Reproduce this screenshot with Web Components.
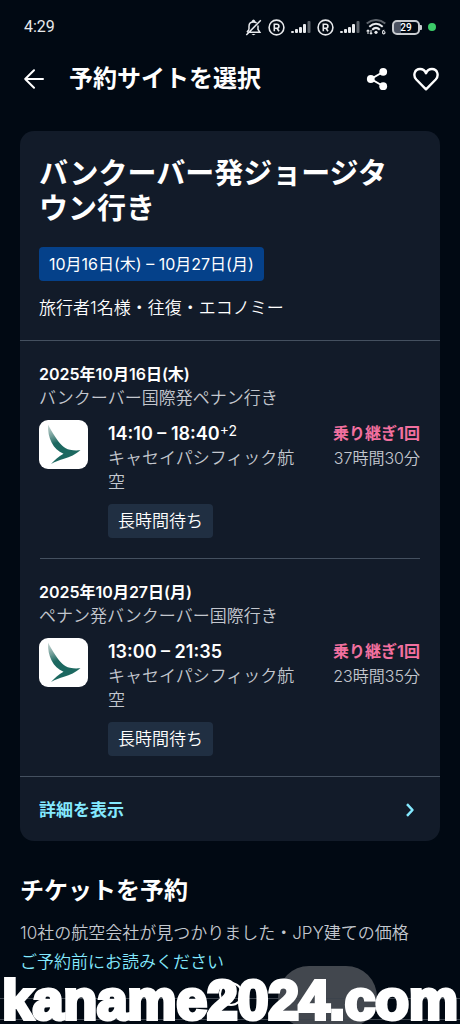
<!DOCTYPE html>
<html lang="ja">
<head>
<meta charset="utf-8">
<meta name="viewport" content="width=device-width, initial-scale=1">
<title>予約サイトを選択</title>
<style>
body { margin: 0; background: #010913; color: #fff; font-family: Inter, "Noto Sans CJK JP", sans-serif; }
</style>
</head>
<body>
<booking-page></booking-page>
<script>
function define(name, html) {
  const template = document.createElement('template');
  template.innerHTML = html;
  customElements.define(name, class extends HTMLElement {
    constructor() {
      super();
      this.attachShadow({ mode: 'open' }).append(template.content.cloneNode(true));
    }
  });
}

define('signal-bars', `
<style>:host { display: block; height: 14px; } svg { display: block; }</style>
<svg width="20" height="14" viewBox="0 0 20 14" fill="#e8eaed" aria-hidden="true">
  <rect x="0" y="11" width="3" height="2" rx="1"/><rect x="4" y="9" width="3" height="4" rx="1"/>
  <rect x="8" y="7" width="3" height="6" rx="1"/><rect x="12" y="4" width="3" height="9" rx="1"/>
  <rect x="16.500" y="1" width="3" height="12" rx="1" fill="#5d636b"/>
</svg>`);

define('roaming-mark', `
<style>:host { display: block; height: 17px; } svg { display: block; }</style>
<svg width="17" height="17" viewBox="0 0 17 17" fill="none" stroke="#e8eaed" stroke-width="1.600" aria-hidden="true">
  <circle cx="8.500" cy="8.500" r="7.400"/>
  <path d="M6.300 12.300V5.200H8.900A2 2 0 0 1 8.900 9.200H6.300M8.900 9.200L11 12.300"/>
</svg>`);

define('status-bar', `
<style>
  :host { display: flex; align-items: center; justify-content: space-between; height: 54px; padding: 0 24px; box-sizing: border-box; }
  time { font: 400 16px/20px Roboto, sans-serif; color: #e8eaed; }
  .icons { display: flex; align-items: center; gap: 6px; }
  svg { display: block; }
  .battery { display: flex; align-items: center; }
  .level { box-sizing: border-box; width: 28px; height: 15px; border: 2px solid #c9ccd0; border-radius: 5px; background: linear-gradient(90deg, #4b5261 30%, transparent 30%); font: 500 10px/11px Roboto, sans-serif; text-align: center; }
  .cap { width: 2px; height: 5px; background: #c9ccd0; border-radius: 0 1px 1px 0; }
  .dot { width: 8px; height: 8px; border-radius: 50%; background: #3ccb69; }
</style>
<time>4:29</time>
<div class="icons">
  <svg width="17" height="17" viewBox="0 0 17 17" fill="none" stroke="#e8eaed" stroke-width="1.500" aria-hidden="true">
    <path d="M4 10.500V7.200C4 4.600 5.800 3 8.500 3C9.600 3 10.700 3.300 11.500 4M13 6.500V10.500L14.800 13.200H4.500M4 10.500L2 13.200M7.300 2.600Q8.500 0 9.700 2.600M1.300 16L15.800 1.200"/>
    <path d="M6.500 15H10.500Q8.500 17.300 6.500 15" fill="#e8eaed" stroke="none"/>
  </svg>
  <roaming-mark></roaming-mark>
  <signal-bars></signal-bars>
  <roaming-mark></roaming-mark>
  <signal-bars></signal-bars>
  <svg width="20" height="16" viewBox="0 0 20 16" fill="none" stroke="#e8eaed" stroke-width="2" aria-hidden="true">
    <path d="M.7 4.500Q10-2.500 19.300 4.500" stroke="#5d636b"/>
    <path d="M3.300 7.700Q10 1.800 16.700 7.700M6.200 10.700Q10 7 13.800 10.700"/>
    <circle cx="10" cy="13.300" r="1.600" fill="#e8eaed" stroke="none"/>
    <path d="M2 15V11M.6 12.300L2 11L3.400 12.300M5 11V15M3.800 13.800L5 15L6.200 13.800M18.400 11.200Q16.600 11 16.600 13.500A1.200 1.200 0 1 0 17.800 12.500" stroke-width="1.100"/>
  </svg>
  <div class="battery"><div class="level">29</div><div class="cap"></div></div>
  <div class="dot"></div>
</div>`);

define('page-header', `
<style>
  :host { display: flex; align-items: center; height: 50px; padding: 0 20px; }
  h1 { flex: 1; margin: 0 0 0 21px; font-size: 24px; line-height: 32px; font-weight: 700; }
  button { border: 0; padding: 0; margin: 0; background: none; color: inherit; width: 28px; height: 28px; display: grid; place-items: center; }
  .actions { display: flex; gap: 21px; }
</style>
<button aria-label="戻る"><svg width="20" height="20" viewBox="0 0 20 20" fill="none" stroke="currentColor" stroke-width="2" stroke-linecap="round" stroke-linejoin="round"><path d="M19 10H1.200M10 1.200L1.200 10L10 18.800"/></svg></button>
<h1><slot></slot></h1>
<div class="actions">
  <button aria-label="共有"><svg width="22" height="24" viewBox="0 0 22 24" fill="currentColor"><path d="M17 5L5 12L17 19" fill="none" stroke="currentColor" stroke-width="2"/><circle cx="17.200" cy="4.800" r="3.900"/><circle cx="4.800" cy="12" r="3.900"/><circle cx="17.200" cy="19.200" r="3.900"/></svg></button>
  <button aria-label="保存"><svg width="26" height="24" viewBox="0 0 26 24" fill="none" stroke="currentColor" stroke-width="2.400" stroke-linejoin="round"><path d="M13 22.300L3.300 12.500C-.3 8.500 1.500 2 7 2C9.800 2 12 3.700 13 6.200C14 3.700 16.200 2 19 2C24.500 2 26.300 8.500 22.700 12.500Z"/></svg></button>
</div>`);

define('airline-logo', `
<style>:host { display: block; width: 49px; height: 49px; border-radius: 9px; background: #fff; } svg { display: block; }</style>
<svg width="49" height="49" viewBox="0 0 49 49" role="img" aria-label="キャセイパシフィック航空">
  <defs><linearGradient id="g" x1="0" y1="0" x2="0.300" y2="1"><stop offset="0" stop-color="#cfdcda"/><stop offset="0.300" stop-color="#6f9c97"/><stop offset="0.500" stop-color="#1c6860"/></linearGradient></defs>
  <path fill="url(#g)" d="M9 4.500C11 8 13.500 13 17 18C20.500 23.500 25 28.500 31 29.800C34.500 30.600 38 30.400 41.500 30.300C36.500 34.500 31 37 25 38.800C20.500 40.200 16.500 41.700 12 44C15.500 40 19.500 36.500 24.500 33.700C14 29.500 8.500 18 9 4.500Z"/>
</svg>`);

define('soft-tag', `
<style>:host { display: block; width: fit-content; padding: 5px 10px; border-radius: 4px; background: #202f42; font-size: 17px; line-height: 24px; white-space: nowrap; }</style>
<slot></slot>`);

define('flight-leg', `
<style>
  :host { display: block; margin: 0 20px 0 19px; padding: 21px 0 20px; font-size: 17px; line-height: 24px; color: #c3c7ce; font-weight: 350; }
  h3 { margin: 0; font-size: 16px; line-height: 24px; font-weight: 600; color: #fff; }
  p { margin: 0; }
  .row { display: grid; grid-template-columns: 49px 1fr auto; column-gap: 20px; padding-top: 10px; }
  .text, .end { padding-top: 1px; }
  .time { font-size: 18px; line-height: 25px; font-weight: 600; color: #fff; }
  .end { padding-left: 10px; text-align: right; font-size: 16px; white-space: nowrap; }
  .stops { line-height: 25px; color: #f2709f; font-weight: 700; }
  soft-tag { margin-top: 10px; color: #fff; }
</style>
<h3><slot name="date"></slot></h3>
<p><slot name="route"></slot></p>
<div class="row">
  <airline-logo></airline-logo>
  <div class="text"><p class="time"><slot name="time"></slot></p><p><slot name="airline"></slot></p><soft-tag>長時間待ち</soft-tag></div>
  <div class="end"><p class="stops"><slot name="stops"></slot></p><p><slot name="duration"></slot></p></div>
</div>`);

define('trip-card', `
<style>
  :host { display: block; margin: 27px 20px 0; border-radius: 14px; background: #121b29; }
  .top { padding: 25px 20px 20px 19px; border-bottom: 1px solid #44505f; }
  h2 { margin: 0 0 21px; padding-right: 20px; font-size: 29px; line-height: 35px; font-weight: 700; }
  .dates { background: #05418a; font-size: 16px; }
  .top p { margin: 15px 0 0; font-size: 17px; line-height: 24px; font-weight: 350; }
  .plus { font-size: 14px; line-height: 14px; font-weight: 400; vertical-align: 4px; }
  hr { border: 0; height: 1px; margin: 0 20px; background: #44505f; }
  a { display: flex; align-items: center; justify-content: space-between; border-top: 1px solid #44505f; padding: 21px 25px 19px 19px; color: #84e9ff; font-size: 17px; line-height: 24px; font-weight: 600; text-decoration: none; }
</style>
<div class="top">
  <h2>バンクーバー発ジョージタウン行き</h2>
  <soft-tag class="dates">10月16日(木) – 10月27日(月)</soft-tag>
  <p>旅行者1名様・往復・エコノミー</p>
</div>
<flight-leg>
  <span slot="date">2025年10月16日(木)</span><span slot="route">バンクーバー国際発ペナン行き</span>
  <span slot="time">14:10 – 18:40<span class="plus">+2</span></span><span slot="airline">キャセイパシフィック航空</span>
  <span slot="stops">乗り継ぎ1回</span><span slot="duration">37時間30分</span>
</flight-leg>
<hr>
<flight-leg>
  <span slot="date">2025年10月27日(月)</span><span slot="route">ペナン発バンクーバー国際行き</span>
  <span slot="time">13:00 – 21:35</span><span slot="airline">キャセイパシフィック航空</span>
  <span slot="stops">乗り継ぎ1回</span><span slot="duration">23時間35分</span>
</flight-leg>
<a href="#details">詳細を表示<svg width="10" height="14" viewBox="0 0 10 14" fill="none" stroke="currentColor" stroke-width="2.500" stroke-linejoin="round" aria-hidden="true"><path d="M2 1.200L7.500 7L2 12.800"/></svg></a>`);

define('ticket-section', `
<style>
  :host { display: block; padding: 33px 20px 50px; font-size: 17px; line-height: 24px; font-weight: 350; }
  h2 { margin: 0 0 13px; font-size: 24px; line-height: 34px; font-weight: 700; }
  p { margin: 0; color: #c3c7ce; }
  a { display: block; margin-top: 5px; color: #84e9ff; text-decoration: none; }
</style>
<h2>チケットを予約</h2>
<p>10社の航空会社が見つかりました・JPY建ての価格</p>
<a href="#notice">ご予約前にお読みください</a>`);

define('site-watermark', `
<style>
  :host { position: fixed; left: 0; right: 0; bottom: 0; height: 58px; overflow: hidden; }
  .pill { position: absolute; left: 60.500%; bottom: -4px; width: 99px; height: 62px; border-radius: 32px; background: #42474e; }
  .sheet { position: absolute; inset: auto 0 4px; height: 20px; border: solid #3c434c; border-width: 1px 0; }
  .ring { position: absolute; left: 47.500%; bottom: 18px; width: 20px; height: 20px; border: 2px solid #fff; border-radius: 50%; }
  .name { position: absolute; left: 0; right: 0; bottom: 0; display: flex; justify-content: center; font: 700 55px/48px "Liberation Sans", sans-serif; white-space: nowrap; -webkit-text-stroke: 4px #fff; }
</style>
<div class="pill"></div><div class="sheet"></div><div class="ring"></div><div class="name">kaname2024.com</div>`);

define('booking-page', `
<style>:host { display: block; }</style>
<status-bar></status-bar>
<page-header>予約サイトを選択</page-header>
<main><trip-card></trip-card><ticket-section></ticket-section></main>
<site-watermark></site-watermark>`);
</script>
</body>
</html>
